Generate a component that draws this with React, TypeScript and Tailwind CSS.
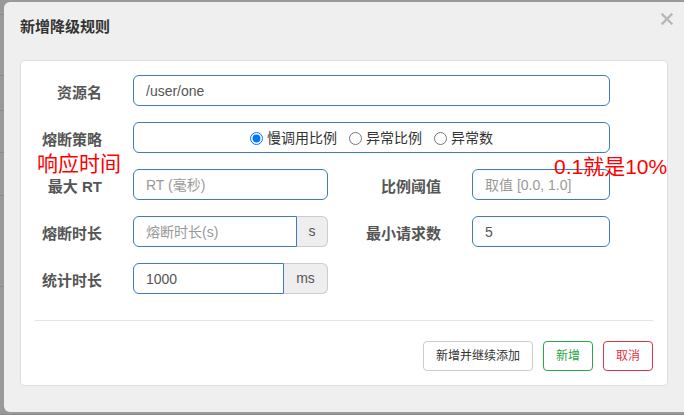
import React from 'react';

const font = "font-['Liberation_Sans','Noto_Sans_CJK_SC',sans-serif]";

const Label: React.FC<{ w: string; children: React.ReactNode }> = ({ w, children }) => (
    <label className={`${w} mt-[5px] shrink-0 text-right text-[15px] font-bold text-[#555]`}>{children}</label>
);

const TextInput: React.FC<{ w: string; value?: string; placeholder?: string; square?: boolean }> = ({ w, value, placeholder, square }) => (
    <input
        readOnly
        defaultValue={value}
        placeholder={placeholder}
        className={`${w} h-[31px] shrink-0 border border-[#3b7dbf] ${square ? 'rounded-l-[6px]' : 'rounded-[6px]'} bg-white px-[12px] text-[14px] text-[#555] placeholder:text-[#999] outline-none`}
    />
);

const Addon: React.FC<{ w: string; children: React.ReactNode }> = ({ w, children }) => (
    <span className={`${w} flex h-[31px] shrink-0 items-center justify-center rounded-r-[6px] border border-l-0 border-[#ccc] bg-[#eee] text-[14px] text-[#555]`}>
        {children}
    </span>
);

export default function App() {
    const bgRows = [15, 61, 35, 42, 43, 91, 128];

    return (
        <div className={`relative h-[415px] w-[684px] overflow-hidden bg-[#999] ${font}`}>
            {/* page behind the overlay */}
            <div className="flex flex-col">
                {bgRows.map((h, i) => (
                    <div key={i} style={{ height: h }} className="border-b border-[#8a8a8a]" />
                ))}
            </div>

            {/* Modal */}
            <div className="absolute left-[4px] top-[2px] h-[410px] w-[690px] rounded-[6px] bg-[#efefef]">
                <div className="flex h-[50px] items-center pl-[16px]">
                    <h4 className="text-[15px] font-bold text-[#333]">新增降级规则</h4>
                </div>
                <button className="absolute left-[656px] top-[10px] p-[1px]">
                    <svg width="12" height="12" viewBox="0 0 12 12">
                        <path d="M1.5 1.5 L10.5 10.5 M10.5 1.5 L1.5 10.5" stroke="#b8b8b8" strokeWidth="2.4" strokeLinecap="square" />
                    </svg>
                </button>

                {/* Form panel */}
                <div className="relative ml-[16px] mt-[8px] h-[326px] w-[648px] rounded-[4px] border border-[#ddd] bg-white px-[14px] pt-[14px]">
                    <div className="flex flex-col gap-[16px]">
                        <div className="flex items-center">
                            <Label w="w-[67px]">资源名</Label>
                            <div className="ml-[31px]">
                                <TextInput w="w-[477px]" value="/user/one" />
                            </div>
                        </div>

                        <div className="flex items-center">
                            <Label w="w-[67px]">熔断策略</Label>
                            <div className="ml-[31px] flex h-[31px] w-[477px] items-center justify-center gap-[12px] rounded-[6px] border border-[#3b7dbf] pt-[1px] text-[14px] text-[#333]">
                                <label className="flex items-center gap-[4px]">
                                    <input type="radio" name="grade" defaultChecked className="m-0 h-[13px] w-[13px]" />
                                    慢调用比例
                                </label>
                                <label className="flex items-center gap-[4px]">
                                    <input type="radio" name="grade" className="m-0 h-[13px] w-[13px]" />
                                    异常比例
                                </label>
                                <label className="flex items-center gap-[4px]">
                                    <input type="radio" name="grade" className="m-0 h-[13px] w-[13px]" />
                                    异常数
                                </label>
                            </div>
                        </div>

                        <div className="flex items-center">
                            <Label w="w-[67px]">最大 RT</Label>
                            <div className="ml-[31px]">
                                <TextInput w="w-[195px]" placeholder="RT (毫秒)" />
                            </div>
                            <Label w="w-[113px]">比例阈值</Label>
                            <div className="ml-[31px]">
                                <TextInput w="w-[138px]" placeholder="取值 [0.0, 1.0]" />
                            </div>
                        </div>

                        <div className="flex items-center">
                            <Label w="w-[67px]">熔断时长</Label>
                            <div className="ml-[31px] flex w-[195px]">
                                <TextInput w="w-[164px]" placeholder="熔断时长(s)" square />
                                <Addon w="w-[31px]">s</Addon>
                            </div>
                            <Label w="w-[113px]">最小请求数</Label>
                            <div className="ml-[31px]">
                                <TextInput w="w-[138px]" value="5" />
                            </div>
                        </div>

                        <div className="flex items-center">
                            <Label w="w-[67px]">统计时长</Label>
                            <div className="ml-[31px] flex w-[195px]">
                                <TextInput w="w-[151px]" value="1000" square />
                                <Addon w="w-[44px]">ms</Addon>
                            </div>
                        </div>
                    </div>

                    <div className="mt-[26px] h-px bg-[#e5e5e5]" />

                    <div className="mt-[20px] flex justify-end gap-[10px]">
                        <button className="h-[30px] rounded-[4px] border border-[#ccc] bg-white px-[12px] text-[12px] text-[#333]">新增并继续添加</button>
                        <button className="h-[30px] rounded-[4px] border border-[#28a745] bg-white px-[12px] text-[12px] text-[#28a745]">新增</button>
                        <button className="h-[30px] rounded-[4px] border border-[#dc3545] bg-white px-[12px] text-[12px] text-[#dc3545]">取消</button>
                    </div>

                    {/* hand-written notes over the form */}
                    <span className="absolute left-[16px] top-[92px] whitespace-nowrap text-[21px] leading-none text-[#ff0000]">响应时间</span>
                    <span className="absolute left-[533px] top-[95px] whitespace-nowrap text-[21px] leading-none text-[#ff0000]">0.1就是10%</span>
                </div>
            </div>
        </div>
    );
}
